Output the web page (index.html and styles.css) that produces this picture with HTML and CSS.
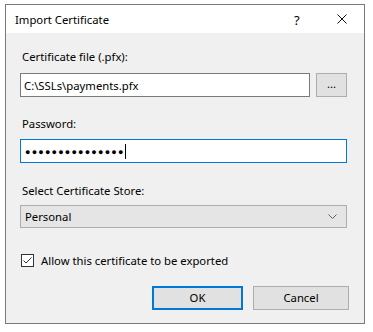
FILE: index.html
```html
<!DOCTYPE html>
<html lang="en">
<head>
    <meta charset="UTF-8">
    <meta name="viewport" content="width=device-width, initial-scale=1.0">
    <title>Import Certificate</title>
    <link rel="stylesheet" href="styles.css">
</head>
<body>

<div class="window">
    <div class="titlebar">
        <span class="title">Import Certificate</span>
        <span class="help">?</span>
        <span class="close">
            <svg width="10" height="10" viewBox="0 0 10 10">
                <path d="M0.5 0.5 L9.5 9.5 M9.5 0.5 L0.5 9.5" stroke="#111" stroke-width="1" fill="none"/>
            </svg>
        </span>
    </div>

    <div class="content">
        <div class="label label-file">Certificate file (.pfx):</div>
        <div class="file-row">
            <div class="textbox file-box">C:\SSLs\payments.pfx</div>
            <div class="browse">...</div>
        </div>

        <div class="label label-pass">Password:</div>
        <div class="textbox pass-box">
            <span class="dots">&#9679;&#9679;&#9679;&#9679;&#9679;&#9679;&#9679;&#9679;&#9679;&#9679;&#9679;&#9679;&#9679;&#9679;&#9679;</span><span class="caret"></span>
        </div>

        <div class="label label-store">Select Certificate Store:</div>
        <div class="combo">
            <span>Personal</span>
            <svg width="9" height="5" viewBox="0 0 9 5">
                <path d="M0.5 0.5 L4.5 4.5 L8.5 0.5" stroke="#606060" stroke-width="1" fill="none"/>
            </svg>
        </div>

        <div class="check-row">
            <span class="checkbox">
                <svg width="13" height="13" viewBox="0 0 13 13">
                    <rect x="0.5" y="0.5" width="12" height="12" fill="#fff" stroke="#333"/>
                    <path d="M2.5 6.5 L5 9 L10.5 3.5" stroke="#333" stroke-width="1" fill="none"/>
                </svg>
            </span>
            <span>Allow this certificate to be exported</span>
        </div>

        <div class="buttons">
            <div class="btn btn-default">OK</div>
            <div class="btn">Cancel</div>
        </div>
    </div>
</div>

</body>
</html>
```

FILE: styles.css
```css
body {
    margin: 0;
    padding: 0;
    background-color: #fff;
    font-family: "Noto Sans", "Open Sans", sans-serif;
    font-size: 11.3px;
    color: #000;
}
.window {
    margin: 4px 0 0 5px;
    width: 358px;
    height: 318px;
    border: 1px solid #7a7a7a;
    background-color: #f0f0f0;
}
.titlebar {
    height: 28px;
    background-color: #fff;
    display: flex;
    align-items: center;
    position: relative;
}
.title {
    margin-left: 9px;
}
.help {
    position: absolute;
    left: 288px;
    top: 6px;
    font-size: 13px;
}
.close {
    position: absolute;
    left: 331px;
    top: 9px;
    line-height: 0;
}
.content {
    padding: 0 17px 0 14px;
}
.label {
    height: 16px;
    line-height: 16px;
    padding-left: 2px;
}
.label-file {
    padding-top: 16px;
}
.label-pass {
    margin-top: 19px;
}
.label-store {
    margin-top: 20px;
}
.file-row {
    display: flex;
    margin-top: 8px;
    height: 24px;
}
.textbox {
    box-sizing: border-box;
    background-color: #fff;
    border: 1px solid #7a7a7a;
    padding-left: 3px;
    display: flex;
    align-items: center;
}
.file-box {
    width: 290px;
    height: 24px;
}
.browse {
    box-sizing: border-box;
    width: 31px;
    height: 24px;
    margin-left: 6px;
    border: 1px solid #adadad;
    background-color: #e1e1e1;
    text-align: center;
    line-height: 20px;
}
.pass-box {
    margin-top: 7px;
    height: 24px;
    border-color: #0078d7;
    padding-left: 4px;
}
.dots {
    font-size: 9px;
    letter-spacing: 1.2px;
    color: #000;
}
.caret {
    display: inline-block;
    width: 1px;
    height: 15px;
    margin-left: 0;
    background-color: #000;
}
.combo {
    box-sizing: border-box;
    margin-top: 6px;
    height: 23px;
    border: 1px solid #adadad;
    background-color: #e5e5e5;
    display: flex;
    align-items: center;
    justify-content: space-between;
    padding: 0 9px 0 4px;
}
.check-row {
    margin-top: 24px;
    height: 16px;
    display: flex;
    align-items: center;
    gap: 7px;
}
.checkbox {
    line-height: 0;
    margin-left: 1px;
}
.buttons {
    margin-top: 18px;
    margin-right: -2px;
    display: flex;
    justify-content: flex-end;
    gap: 10px;
}
.btn {
    box-sizing: border-box;
    width: 96px;
    height: 24px;
    border: 1px solid #adadad;
    background-color: #e1e1e1;
    text-align: center;
    line-height: 22px;
}
.btn-default {
    width: 91px;
    border: 2px solid #0078d7;
    line-height: 20px;
}
```
